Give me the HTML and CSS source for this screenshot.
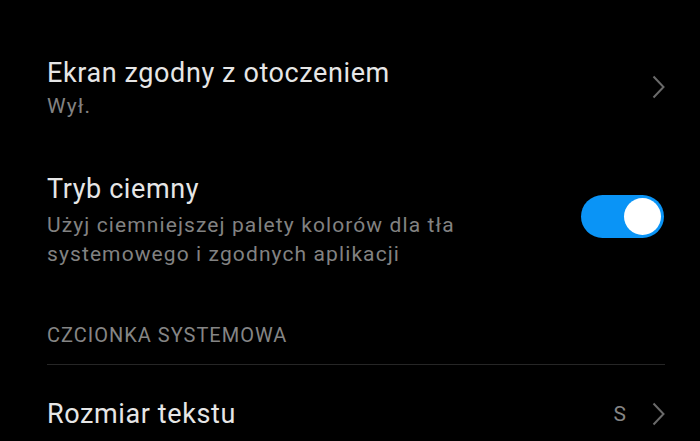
FILE: index.html
```html
<!DOCTYPE html>
<html lang="pl">
<head>
<meta charset="utf-8">
<link rel="stylesheet" href="styles.css">
</head>
<body>
<div class="list">
  <div class="item item-first">
    <div class="text">
      <div class="title">Ekran zgodny z otoczeniem</div>
      <div class="sub">Wył.</div>
    </div>
    <svg class="chev chev-top" width="13" height="24" viewBox="0 0 13 24"><polyline points="1.5,1.5 11.5,12 1.5,22.5" fill="none" stroke="#6a6a6a" stroke-width="2"/></svg>
  </div>
  <div class="item item-second">
    <div class="text">
      <div class="title">Tryb ciemny</div>
      <div class="sub sub-gap">Użyj ciemniejszej palety kolorów dla tła<br>systemowego i zgodnych aplikacji</div>
    </div>
    <div class="toggle"><div class="knob"></div></div>
  </div>
  <div class="section">CZCIONKA SYSTEMOWA</div>
  <div class="divider"></div>
  <div class="item item-third">
    <div class="title">Rozmiar tekstu</div>
    <div class="value">
      <span class="val">S</span>
      <svg class="chev" width="13" height="24" viewBox="0 0 13 24"><polyline points="1.5,1.5 11.5,12 1.5,22.5" fill="none" stroke="#6a6a6a" stroke-width="2"/></svg>
    </div>
  </div>
</div>
</body>
</html>
```

FILE: styles.css
```css
html, body {
  margin: 0;
  padding: 0;
  background: #000;
  height: 441px;
  overflow: hidden;
}
body {
  font-family: Roboto, "Noto Sans", sans-serif;
}
.list {
  padding: 56px 36px 0 47px;
}
.item {
  display: flex;
  justify-content: space-between;
  align-items: flex-start;
}
.title {
  font-size: 27px;
  line-height: 34px;
  letter-spacing: 0.6px;
  color: #e6e6e6;
}
.sub {
  font-size: 21px;
  line-height: 29px;
  letter-spacing: 1.1px;
  color: #828282;
  margin-top: 2px;
}
.sub-gap {
  margin-top: 5px;
}
.chev {
  display: block;
}
.chev-top {
  margin-top: 19px;
  margin-right: -1px;
}
.item-second {
  margin-top: 51px;
}
.toggle {
  width: 83px;
  height: 43px;
  border-radius: 22px;
  background: #0a94f6;
  margin-top: 23px;
  display: flex;
  align-items: center;
  justify-content: flex-end;
  padding-right: 3px;
  box-sizing: border-box;
}
.knob {
  width: 37px;
  height: 37px;
  border-radius: 50%;
  background: #fff;
}
.section {
  margin-top: 54px;
  font-size: 20px;
  line-height: 24px;
  letter-spacing: 1px;
  color: #858585;
}
.divider {
  margin-top: 17px;
  height: 1px;
  background: #262626;
  margin-right: -1px;
}
.item-third {
  margin-top: 32px;
  align-items: center;
}
.value {
  display: flex;
  align-items: center;
  gap: 26px;
  margin-right: -1px;
}
.val {
  font-size: 21px;
  color: #858585;
}
```
